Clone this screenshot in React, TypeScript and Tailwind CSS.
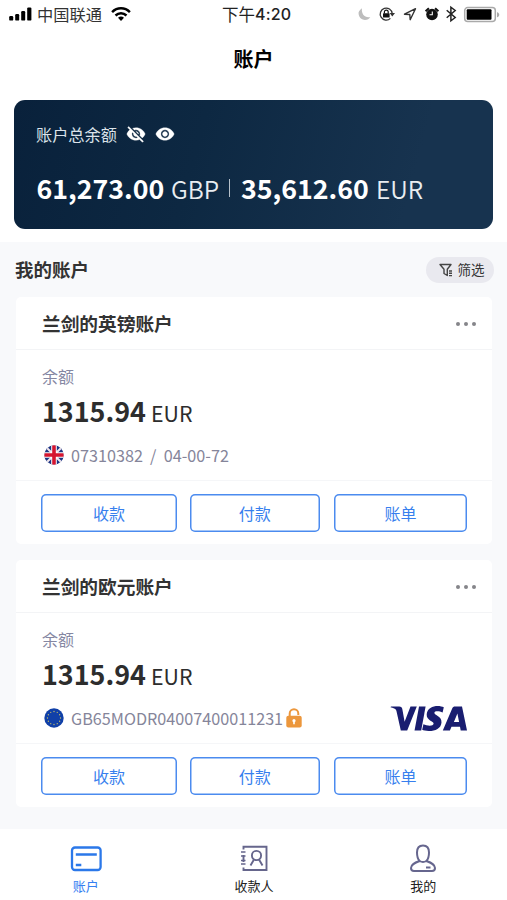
import React from "react";

const cjk = "font-['Noto_Sans_CJK_SC',sans-serif]";

function SignalIcon() {
  return (
    <svg className="h-[14px] w-[23px] shrink-0" viewBox="0 0 23 14">
      <rect x="0.2" y="9" width="4" height="4.6" rx="1.2" />
      <rect x="6.2" y="7" width="4" height="6.6" rx="1.2" />
      <rect x="12.2" y="4" width="4" height="9.6" rx="1.2" />
      <rect x="18.2" y="0.4" width="4.2" height="13.2" rx="1.2" />
    </svg>
  );
}

function WifiIcon() {
  return (
    <svg className="h-[14px] w-5" viewBox="0 0 20 14" fill="none" stroke="#000" strokeWidth="2.5">
      <path d="M1.1 5.1C6.2.1 13.8.1 18.9 5.1" />
      <path d="M4.5 8.5C7.7 5.5 12.3 5.5 15.5 8.5" />
      <path d="M7 10.7Q10 8.1 13 10.7L10 13.9Z" fill="#000" stroke="none" />
    </svg>
  );
}

function StatusIcons() {
  return (
    <svg className="-mt-[2px] h-5 w-[143px]" viewBox="357 4 143 20" fill="none">
      <path d="M362 8.2C359.300 10 358 12 358.700 14.600C359.300 18 362 20 365 20C367.400 20 369.300 18.800 370.300 17C365 18.200 361 14 362 8.200Z" fill="#bdbdbd" />
      <path d="M390.400 18.400A6 6 0 1 1 392.200 13.500" stroke="#333" strokeWidth="1.300" />
      <path d="M389.600 13.100H395L392.300 16.500Z" fill="#333" />
      <rect x="383" y="13.300" width="6.600" height="4.300" rx=".6" fill="#111" />
      <path d="M384.400 13.500V12a1.900 1.900 0 0 1 3.800 0v1.500" stroke="#111" strokeWidth="1.200" />
      <path d="M404.500 14.200L415.500 8.700L410.200 19.700L409.800 14.500Z" stroke="#333" strokeWidth="1.400" strokeLinejoin="round" />
      <circle cx="432" cy="14.500" r="5.800" fill="#111" />
      <path d="M425.600 11.200L428.900 8.200M438.400 11.200L435.100 8.200" stroke="#111" strokeWidth="2" />
      <path d="M432.300 11.500V14.800H429.500" stroke="#fff" strokeWidth="1.100" />
      <path d="M446.700 10.300L455.200 17.500L450.900 20.800V7.200L455.200 10.500L446.700 17.700" stroke="#222" strokeWidth="1.500" />
      <rect x="464.700" y="7.600" width="30.600" height="13.800" rx="3" stroke="#aaa" strokeWidth="1.500" />
      <rect x="466.700" y="9.200" width="24.800" height="10.600" rx="1" fill="#000" />
      <path d="M497 12.200C500 12.800 500 16.600 497 17.200Z" fill="#aaa" />
    </svg>
  );
}

function StatusBar() {
  return (
    <header className="flex h-[30px] items-center text-black">
      <div className="flex h-full w-[222px] items-center pb-[2px] pl-[9px]">
        <SignalIcon />
        <span className="ml-[5px] w-[65px] shrink-0 text-[16.250px] leading-[29px] whitespace-nowrap text-[#333]">中国联通</span>
        <span className="ml-[9px]"><WifiIcon /></span>
      </div>
      <div className="flex w-[135px] items-center pb-px whitespace-nowrap text-[16.500px] leading-[29px] text-[#222]">
        下午<span className="font-[Inter] text-[16px] font-medium tracking-[0.200px]">4:20</span>
      </div>
      <StatusIcons />
    </header>
  );
}

const eyePath =
  "M12 4.500C7 4.500 2.730 7.610 1 12c1.730 4.390 6 7.500 11 7.500s9.270-3.110 11-7.500c-1.730-4.390-6-7.500-11-7.500zM12 17c-2.760 0-5-2.240-5-5s2.240-5 5-5 5 2.240 5 5-2.240 5-5 5zm0-8c-1.660 0-3 1.340-3 3s1.340 3 3 3 3-1.340 3-3-1.340-3-3-3z";
const eyeOffPath =
  "M12 7c2.760 0 5 2.240 5 5 0 .65-.13 1.260-.36 1.830l2.920 2.920c1.510-1.260 2.700-2.890 3.430-4.750-1.730-4.390-6-7.500-11-7.500-1.400 0-2.740.25-3.980.7l2.160 2.160C10.740 7.130 11.350 7 12 7zM2 4.270l2.280 2.280.46.46C3.080 8.300 1.780 10.020 1 12c1.730 4.390 6 7.500 11 7.500 1.550 0 3.030-.3 4.380-.84l.42.42L19.730 22 21 20.730 3.270 3 2 4.270zM7.530 9.800l1.550 1.550c-.05.21-.08.43-.08.65 0 1.660 1.340 3 3 3 .22 0 .44-.03.65-.08l1.550 1.550c-.67.33-1.410.53-2.200.53-2.760 0-5-2.240-5-5 0-.79.2-1.530.53-2.200zm4.310-.78l3.150 3.150.02-.16c0-1.660-1.340-3-3-3l-.17.01z";

function Hero() {
  return (
    <section className="mx-[14px] flex h-[128.500px] flex-col rounded-[11px] bg-linear-[105deg,#09213b_0%,#0d2842_38%,#17334f_82%] pl-[23px] text-white">
      <div className="mt-[22px] flex h-6 items-center">
        <span className="-ml-px w-[81px] whitespace-nowrap text-[16.200px] leading-6 text-[#dce3ea]">账户总余额</span>
        <svg className="ml-[9px] size-5" viewBox="0 0 24 24" fill="#fff" stroke="#fff" strokeWidth=".4"><path d={eyeOffPath} /></svg>
        <svg className="ml-[9px] size-5" viewBox="0 0 24 24" fill="#fff" stroke="#fff" strokeWidth=".4"><path d={eyePath} /></svg>
      </div>
      <div className="mt-[22px] flex h-10 items-baseline whitespace-nowrap leading-10">
        <b className="-ml-[0.500px] w-[134.500px] text-[26.750px]">61,273.00</b>
        <span className="w-[58px] text-[24.500px] font-[350] text-[#e9edf1]">GBP</span>
        <span className="h-[18px] w-px self-center bg-[#b6c0ca]" />
        <b className="ml-[11px] w-[135px] text-[26.750px]">35,612.60</b>
        <span className="text-[24.500px] font-[350] text-[#e9edf1]">EUR</span>
      </div>
    </section>
  );
}

function UkFlag() {
  return (
    <svg className="size-5" viewBox="0 0 20 20">
      <clipPath id="uk"><circle cx="10" cy="10" r="9.700" /></clipPath>
      <g clipPath="url(#uk)">
        <path d="M0 0H20V20H0Z" fill="#1c3583" />
        <path d="M0 0L20 20M20 0L0 20" stroke="#f4e9ee" strokeWidth="2" />
        <path d="M10 0V20M0 10H20" stroke="#fff" strokeWidth="5.600" />
        <path d="M10 0V20M0 10H20" stroke="#d5152f" strokeWidth="3.600" />
      </g>
    </svg>
  );
}

function EuFlag() {
  const dots = Array.from({ length: 12 }, (_, i) => (i * Math.PI) / 6);
  return (
    <svg className="size-5" viewBox="0 0 20 20">
      <circle cx="10" cy="10" r="9.700" fill="#1040a8" />
      {dots.map((a) => (
        <circle key={a} cx={10 + 6.5 * Math.cos(a)} cy={10 + 6.5 * Math.sin(a)} r="0.650" fill="#c5bd68" />
      ))}
    </svg>
  );
}

function LockIcon() {
  return (
    <svg className="ml-[3px] h-5 w-4" viewBox="0 0 16 20">
      <path d="M3.700 8V5.600A4.300 4.300 0 0 1 12.300 5.600V7" fill="none" stroke="#ec973c" strokeWidth="2" />
      <rect x="0.300" y="7.800" width="15.400" height="11.800" rx="2" fill="#ec973c" />
      <circle cx="8" cy="12.700" r="1.600" fill="#fff" />
      <path d="M7.200 13H8.800V16.300H7.200Z" fill="#fff" />
    </svg>
  );
}

function VisaLogo() {
  return (
    <svg className="mt-px h-[26px] w-[78px]" viewBox="0 0 78 26" fill="#191d70">
      <path d="M0.500 1.200L1 0.600H9.200C11.200 .6 12 1.500 12.400 3.500L14.600 15.700L20.500 .6H26.800L17.200 24.400H10.800L6.500 5.200C6.100 3.500 5.600 3.100 4.200 2.400C3.100 1.900 1.700 1.500 .5 1.200Z" />
      <path d="M29 .6H35.600L31.200 24.400H24.500Z" />
      <path d="M53.800 1.300L52.600 6.500C49.300 4.900 44.600 4.700 44.400 6.800C44.200 9.400 52 10.100 51.500 16.400C51 22.600 45.100 25 38.700 24.900C35.800 24.800 33.300 24.300 32.200 23.700L33.400 18.200C37 20 43.300 20.400 43.600 17.800C43.900 15.100 36.200 14.700 36.700 8.300C37.200 2.500 42.600 0 47.800 0C50 0 52.400.6 53.800 1.300Z" />
      <path fillRule="evenodd" d="M65 .6H72L77 24.400H70.700L70 20.800H61.500L59.900 24.400H52.800L62.300 2.300C62.800 1.100 63.700.6 65 .6ZM67.400 7.500L63.900 16H69.100Z" />
    </svg>
  );
}

function AccountCard({ title, number, flag, locked }: { title: string; number: string; flag: React.ReactNode; locked?: boolean }) {
  const button =
    "flex h-[38px] items-center justify-center rounded-[5px] shadow-[inset_0_0_0_1.500px_#4b8bef] text-[16px] text-[#377fee]";
  return (
    <article className="flex h-[247px] flex-col rounded-[5px] bg-white">
      <div className="flex h-[53px] items-center justify-between border-b border-[#f3f4f6] pr-[16px] pl-[26px]">
        <h2 className="text-[18.700px] leading-[52px] font-bold text-[#333]">{title}</h2>
        <span className="mt-px flex gap-1">
          <i className="size-1 rounded-full bg-[#85858a]" />
          <i className="size-1 rounded-full bg-[#85858a]" />
          <i className="size-1 rounded-full bg-[#85858a]" />
        </span>
      </div>
      <div className="flex h-[131px] flex-col border-b border-[#f5f6f8] pr-[24px] pl-[26px]">
        <div className="mt-[14px] h-6 text-[16px] leading-6 text-[#8587a2]">余额</div>
        <div className="mt-[3px] flex h-10 items-baseline whitespace-nowrap leading-10 text-[#2d2d2d]">
          <b className="w-[109px] text-[26.900px]">1315.94</b>
          <span className="text-[21.300px]">EUR</span>
        </div>
        <div className="mt-[9px] flex h-[30px] items-center whitespace-nowrap">
          <span className="ml-[1.500px]">{flag}</span>
          <span className="ml-[7.500px] text-[16.200px] leading-[30px] whitespace-pre text-[#85859a]">{number}</span>
          {locked && <LockIcon />}
          {locked && <span className="ml-auto"><VisaLogo /></span>}
        </div>
      </div>
      <div className="flex items-center pt-[12.500px] pl-[25px]">
        <button className={`${button} w-[136px]`}>收款</button>
        <button className={`${button} ml-[12.500px] w-[130.500px]`}>付款</button>
        <button className={`${button} ml-[14px] w-[133px]`}>账单</button>
      </div>
    </article>
  );
}

function TabBar() {
  const tab = "flex w-[169px] flex-col items-center text-[13px] leading-5";
  return (
    <nav className="flex h-[71px] bg-white pt-[15px] pl-px text-[#222]">
      <div className={`${tab} pl-px text-[#3680f1]`}>
        <svg className="h-[30px] w-8" viewBox="0 0 32 30" fill="none" stroke="#2b78e9" strokeWidth="2.300">
          <rect x="2" y="3.500" width="28.600" height="22.500" rx="3" />
          <path d="M5.800 10.500H26.800M5.800 21H11.300" />
        </svg>
        <span className="mt-[2px]">账户</span>
      </div>
      <div className={tab}>
        <svg className="h-[30px] w-8" viewBox="0 0 32 30" fill="none" stroke="#66668c" strokeWidth="1.900">
          <path d="M5.500 5.500V2.700H28.500V26H5.500V23.500M5.500 11V18" />
          <path d="M3 8H7.500M3 12H7.500M3 16.500H7.500M3 20H7.500" strokeWidth="1.600" />
          <circle cx="18.500" cy="11.500" r="4.600" />
          <path d="M16 15.500L12.500 21.500M21 15.500L24.500 21.500" />
        </svg>
        <span className="mt-[2px]">收款人</span>
      </div>
      <div className={`${tab} pl-px`}>
        <svg className="h-[30px] w-8" viewBox="0 0 32 30" fill="none" stroke="#66668e" strokeWidth="2">
          <path d="M12.700 17C10 14.500 10 11.500 10 8.500C10 4 12.500 1.500 16 1.500S22 4 22 8.500C22 11.500 22 14.500 19.300 17C25 19 28 20.500 28 24C28 26 27 27 25 27H7C5 27 4 26 4 24C4 20.500 7 19 12.700 17ZM12.700 17Q16 19 19.300 17" strokeLinejoin="round" />
          <path d="M19 23.500H23.500" />
        </svg>
        <span className="mt-[2px]">我的</span>
      </div>
    </nav>
  );
}

export default function App() {
  return (
    <main className={`${cjk} flex h-[900px] w-[507px] flex-col overflow-hidden bg-white`}>
      <StatusBar />
      <h1 className="h-[70px] text-center text-[20px] leading-[58px] font-bold text-black">账户</h1>
      <Hero />
      <section className="mt-[13.500px] flex h-[587px] flex-col bg-[#f8f9fb] pr-[15px] pl-[16px]">
        <div className="flex h-[55px] items-center justify-between">
          <h2 className="-ml-px text-[18.500px] font-bold text-[#333]">我的账户</h2>
          <button className="-mr-[2px] flex h-[26px] w-[68px] items-center justify-center gap-[5px] rounded-full bg-[#e9e9ef] pl-[3px] text-[13.500px] text-[#333]">
            <svg className="size-[14px]" viewBox="0 0 14 14" fill="none" stroke="#444" strokeWidth="1.400">
              <path d="M1 1.500H12L8.300 6.200V12.500L5 10.500V6.200Z" strokeLinejoin="round" />
              <path d="M10 8H13M10 10.300H13M10 12.600H13" />
            </svg>
            筛选
          </button>
        </div>
        <div className="flex flex-col gap-4">
          <AccountCard title="兰剑的英镑账户" number="07310382  /  04-00-72" flag={<UkFlag />} />
          <AccountCard title="兰剑的欧元账户" number="GB65MODR04007400011231" flag={<EuFlag />} locked />
        </div>
      </section>
      <TabBar />
    </main>
  );
}
